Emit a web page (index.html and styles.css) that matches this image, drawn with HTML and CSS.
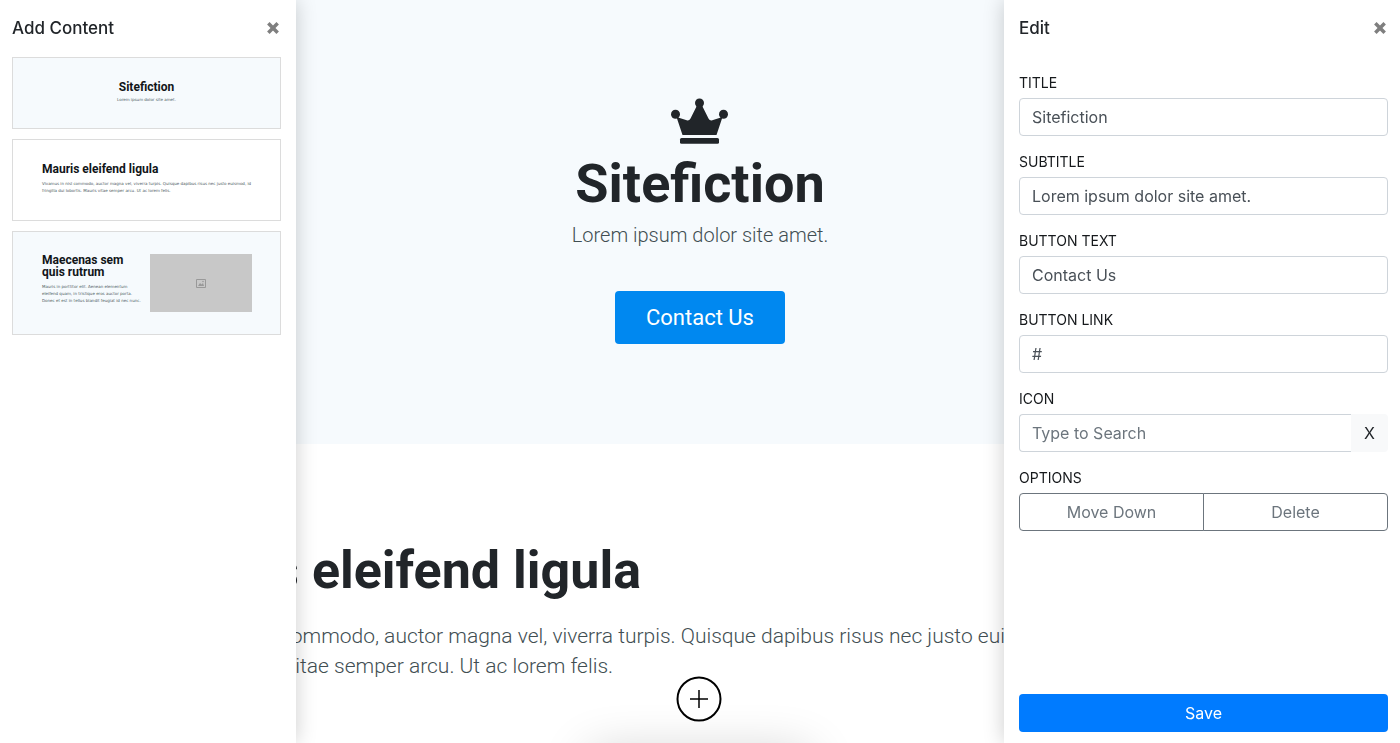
FILE: index.html
```html
<!DOCTYPE html>
<html lang="en">
<head>
<meta charset="utf-8">
<meta name="viewport" content="width=device-width, initial-scale=1">
<title>Sitefiction</title>
<link rel="stylesheet" href="styles.css">
</head>
<body>
<main class="page">
  <section class="hero">
    <svg class="hero-icon" viewBox="0 0 58 46" aria-hidden="true">
      <circle cx="28.500" cy="5" r="4.500"/><circle cx="4.500" cy="16.200" r="4.500"/><circle cx="52.500" cy="16.200" r="4.500"/>
      <path d="M5.500 19 16.500 22.500C18 22.500 18.800 21.700 19.500 20.500L26 7.500h5L37.500 20.500C38.200 21.700 39 22.500 40.500 22.500L51.500 19 45.500 37H11.500Z"/>
      <rect x="9" y="40" width="39" height="5.700" rx="1.500"/>
    </svg>
    <h1 class="headline">Sitefiction</h1>
    <p class="lead">Lorem ipsum dolor site amet.</p>
    <a class="cta" href="#">Contact Us</a>
  </section>
  <section class="text-block">
    <h2 class="headline">Mauris eleifend ligula</h2>
    <p class="lead">Vivamus in nisi commodo, auctor magna vel, viverra turpis. Quisque dapibus risus nec justo euismod, id fringilla dui<br>lobortis. Mauris vitae semper arcu. Ut ac lorem felis.</p>
  </section>
</main>

<div class="add-dock">
  <button class="add-button" type="button" aria-label="Add content">
    <svg viewBox="0 0 46 46" aria-hidden="true"><circle cx="23" cy="23" r="21.500" stroke-width="2"/><path d="M23 14v18M14 23h18" stroke-width="1.500"/></svg>
  </button>
</div>

<aside class="panel panel-add">
  <header class="panel-header">
    <h2 class="panel-title">Add Content</h2>
    <button class="close" type="button" aria-label="Close"><svg viewBox="0 0 12 12" aria-hidden="true"><path d="M2 2l8 8M10 2l-8 8"/></svg></button>
  </header>
  <div class="thumbs">
    <button class="thumb thumb-hero" type="button">
      <span class="thumb-title">Sitefiction</span>
      <span class="thumb-text">Lorem ipsum dolor site amet.</span>
    </button>
    <button class="thumb thumb-article" type="button">
      <span class="thumb-title">Mauris eleifend ligula</span>
      <span class="thumb-text">Vivamus in nisl commodo, auctor magna vel, viverra turpis. Quisque dapibus risus nec justo euismod, id<br>fringilla dui lobortis. Mauris vitae semper arcu. Ut ac lorem felis.</span>
    </button>
    <button class="thumb thumb-media" type="button">
      <span class="thumb-copy">
        <span class="thumb-title">Maecenas sem<br>quis rutrum</span>
        <span class="thumb-text">Mauris in porttitor elit. Aenean elementum<br>eleifend quam, in tristique eros auctor porta.<br>Donec et est in tellus blandit feugiat id nec nunc.</span>
      </span>
      <span class="thumb-image">
        <svg viewBox="0 0 10 9" aria-hidden="true"><path d="M.5.5h9v8h-9z" fill="none" stroke="#999"/><path d="M2 7l2-3 1.500 1.500L7 4l1 3z" fill="#999"/><circle cx="7" cy="2.500" r=".8" fill="#999"/></svg>
      </span>
    </button>
  </div>
</aside>

<aside class="panel panel-edit">
  <header class="panel-header">
    <h2 class="panel-title">Edit</h2>
    <button class="close" type="button" aria-label="Close"><svg viewBox="0 0 12 12" aria-hidden="true"><path d="M2 2l8 8M10 2l-8 8"/></svg></button>
  </header>
  <form class="form">
    <div class="field"><label class="label" for="title">TITLE</label><input class="input" id="title" type="text" value="Sitefiction"></div>
    <div class="field"><label class="label" for="subtitle">SUBTITLE</label><input class="input" id="subtitle" type="text" value="Lorem ipsum dolor site amet."></div>
    <div class="field"><label class="label" for="btn-text">BUTTON TEXT</label><input class="input" id="btn-text" type="text" value="Contact Us"></div>
    <div class="field"><label class="label" for="btn-link">BUTTON LINK</label><input class="input" id="btn-link" type="text" value="#"></div>
    <div class="field"><label class="label" for="icon">ICON</label>
      <div class="group"><input class="input" id="icon" type="text" placeholder="Type to Search"><button class="clear" type="button">X</button></div>
    </div>
    <div class="field"><span class="label" id="options">OPTIONS</span>
      <div class="group" role="group" aria-labelledby="options"><button class="option" type="button">Move Down</button><button class="option" type="button">Delete</button></div>
    </div>
    <button class="save" type="submit">Save</button>
  </form>
</aside>
</body>
</html>
```

FILE: styles.css
```css
* { box-sizing: border-box; }

body {
  margin: 0;
  background: #fff;
  color: #212529;
  font-family: Inter, "Liberation Sans", sans-serif;
  font-size: 16px;
  line-height: 24px;
}

h1, h2, p { margin: 0; }
button, input { font: inherit; }
button { cursor: pointer; }

.page {
  height: 100vh;
  overflow: hidden;
  font-family: Roboto, sans-serif;
}

.hero {
  display: flex;
  flex-direction: column;
  align-items: center;
  padding: 98px 16px 100px;
  background: #f6fafd;
  text-align: center;
}

.hero-icon { width: 58px; height: 46px; fill: #212529; }

.headline {
  font-size: 54px;
  font-weight: 700;
  line-height: 60px;
}

.hero .headline { margin-top: 10px; }

.lead {
  color: #414e52;
  font-size: 20px;
  font-weight: 300;
  line-height: 30px;
}

.hero .lead { margin-top: 6px; }

.cta {
  margin-top: 41px;
  padding: 10px 31px;
  border-radius: 4px;
  background: #0088f0;
  color: #fff;
  font-size: 22px;
  line-height: 33px;
  text-decoration: none;
}

.text-block {
  max-width: 1156px;
  margin: 0 auto;
  padding: 97px 15px;
}

.text-block .headline { font-size: 52px; }
.text-block .lead { margin-top: 20px; font-size: 21px; }

.add-dock {
  position: fixed;
  bottom: 0;
  left: 50%;
  display: flex;
  justify-content: center;
  width: 240px;
  margin-left: -121px;
  padding-bottom: 21px;
}

.add-dock::after {
  content: "";
  position: absolute;
  top: 100%;
  left: 10px;
  right: 10px;
  height: 40px;
  box-shadow: 0 10px 50px rgba(0, 0, 0, 0.2);
}

.add-button {
  z-index: 1;
  width: 46px;
  height: 46px;
  padding: 0;
  border: 0;
  border-radius: 50%;
  background: #fff;
}

.add-button svg { display: block; fill: none; stroke: #000; }

.panel {
  position: fixed;
  top: 0;
  bottom: 0;
  display: flex;
  flex-direction: column;
  background: #fff;
  box-shadow: 0 0 20px rgba(0, 0, 0, 0.2);
}

.panel-add { left: 0; width: 296px; padding: 12px 15px 12px 12px; }
.panel-edit { right: 0; width: 396px; padding: 12px 12px 11px 15px; }

.panel-header {
  display: flex;
  align-items: center;
  justify-content: space-between;
  height: 31px;
  padding-right: 1px;
}

.panel-title { font-size: 17px; font-weight: 500; }

.close {
  width: 14px;
  height: 14px;
  padding: 0;
  border: 0;
  background: none;
}

.close svg { display: block; fill: none; stroke: #7f7f7f; stroke-width: 3; }

.thumbs {
  display: flex;
  flex-direction: column;
  gap: 10px;
  margin-top: 14px;
}

.thumb {
  display: flex;
  flex-direction: column;
  padding: 23px 29px;
  border: 1px solid #dcdcdc;
  background: #f6fafd;
  color: #111518;
  font-family: Roboto, sans-serif;
  text-align: left;
}

.thumb-hero { align-items: center; min-height: 72px; }
.thumb-hero .thumb-text { margin-top: 3px; }
.thumb-article { min-height: 82px; background: #fff; }

.thumb-media {
  flex-direction: row;
  justify-content: space-between;
  min-height: 104px;
  padding: 22px 28px 22px 29px;
}

.thumb-copy { display: flex; flex-direction: column; width: 100px; }

.thumb-title { font-size: 12px; font-weight: 700; line-height: 12px; }

.thumb-text {
  margin-top: 5px;
  color: #4d5a5e;
  font-family: "DejaVu Sans", sans-serif;
  font-size: 4px;
  line-height: 7px;
  white-space: nowrap;
}

.thumb-image {
  display: flex;
  align-items: center;
  justify-content: center;
  width: 102px;
  height: 58px;
  background: #c8c8c8;
}

.thumb-image svg { width: 10px; height: 9px; }

.form {
  display: flex;
  flex: 1;
  flex-direction: column;
  gap: 16px;
  margin-top: 30px;
}

.label {
  display: block;
  margin-bottom: 6px;
  color: #16191c;
  font-size: 14px;
  line-height: 19px;
}

.input {
  width: 100%;
  height: 38px;
  padding: 6px 12px;
  border: 1px solid #ced4da;
  border-radius: 4px;
  background: #fff;
  color: #495057;
}

.input::placeholder { color: #6c757d; opacity: 1; }

.group { display: flex; }
.group .input { flex: 1; min-width: 0; border-right: 0; border-radius: 4px 0 0 4px; }

.clear {
  width: 37px;
  padding: 0;
  border: 0;
  border-radius: 0 4px 4px 0;
  background: #f8f9fa;
  color: #212529;
}

.option {
  flex: 1;
  height: 38px;
  border: 1px solid #6c757d;
  border-radius: 4px 0 0 4px;
  background: #fff;
  color: #6c757d;
}

.option + .option { margin-left: -1px; border-radius: 0 4px 4px 0; }

.save {
  height: 38px;
  margin-top: auto;
  border: 0;
  border-radius: 4px;
  background: #007bff;
  color: #fff;
}
```
